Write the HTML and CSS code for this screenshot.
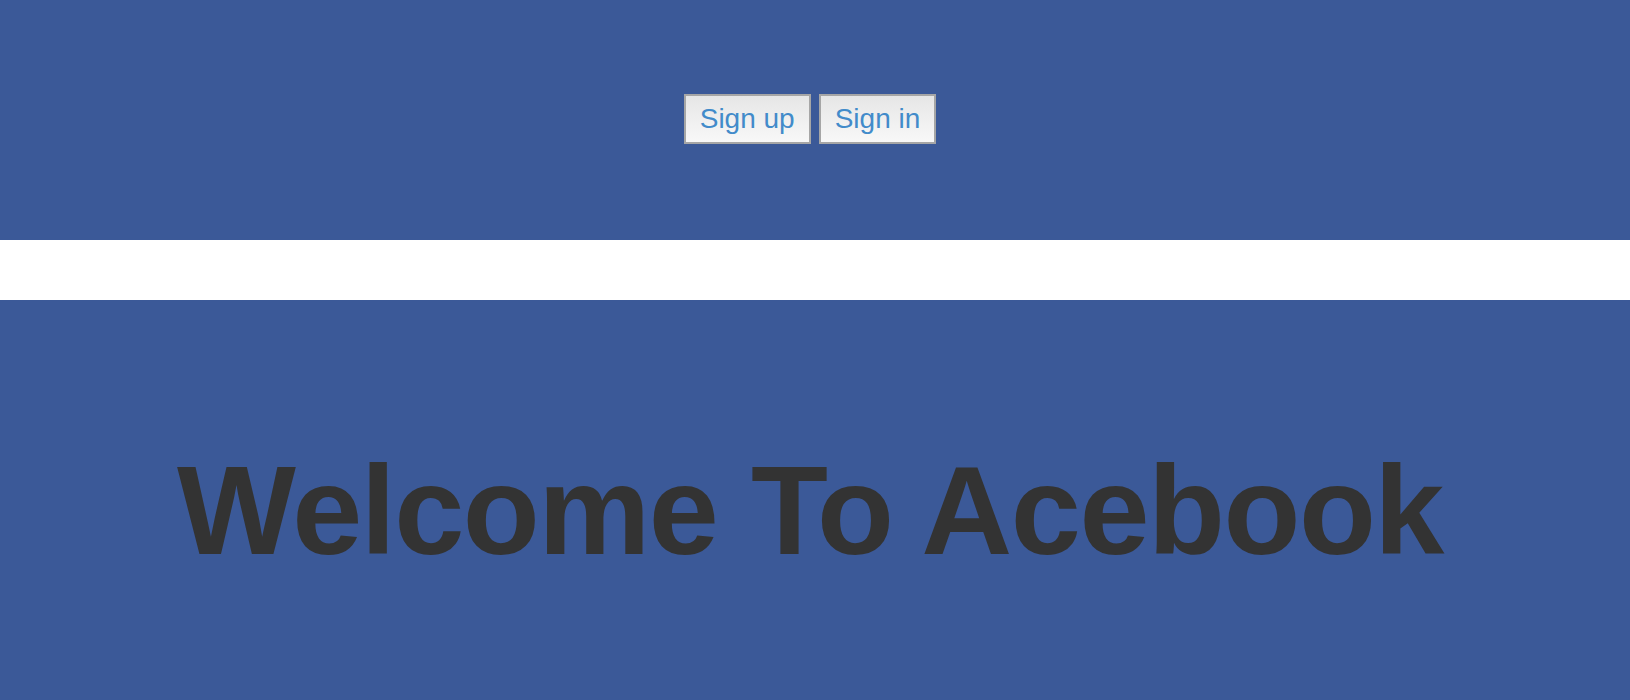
FILE: index.html
```html
<!DOCTYPE html>
<html>
<head>
<meta charset="utf-8">
<link rel="stylesheet" href="styles.css">
</head>
<body>
<header class="top">
  <nav class="actions">
    <button class="btn">Sign up</button>
    <button class="btn">Sign in</button>
  </nav>
</header>
<div class="spacer"></div>
<main class="hero">
  <h1 class="title">Welcome To Acebook</h1>
</main>
</body>
</html>
```
FILE: styles.css
```css
html, body {
  margin: 0;
  padding: 0;
  background: #ffffff;
  font-family: "Liberation Sans", Arial, Helvetica, sans-serif;
}
.top {
  height: 240px;
  background: #3b5998;
  box-sizing: border-box;
  padding: 94px 10px 0 0;
}
.actions {
  display: flex;
  justify-content: center;
  gap: 8px;
}
.btn {
  font-family: "Liberation Sans", Arial, Helvetica, sans-serif;
  font-size: 28px;
  line-height: 32px;
  color: #428bca;
  background: linear-gradient(to bottom, #e6e6e6, #f8f8f8);
  border: 2px solid #a6a6a6;
  border-radius: 0;
  padding: 7px 14px;
  margin: 0;
}
.spacer {
  height: 60px;
  background: #ffffff;
}
.hero {
  background: #3b5998;
  height: 400px;
  box-sizing: border-box;
  padding: 138px 10px 0 0;
}
.title {
  margin: 0;
  text-align: center;
  font-size: 126px;
  line-height: normal;
  font-weight: 700;
  color: #333333;
  letter-spacing: -1.5px;
}
```
